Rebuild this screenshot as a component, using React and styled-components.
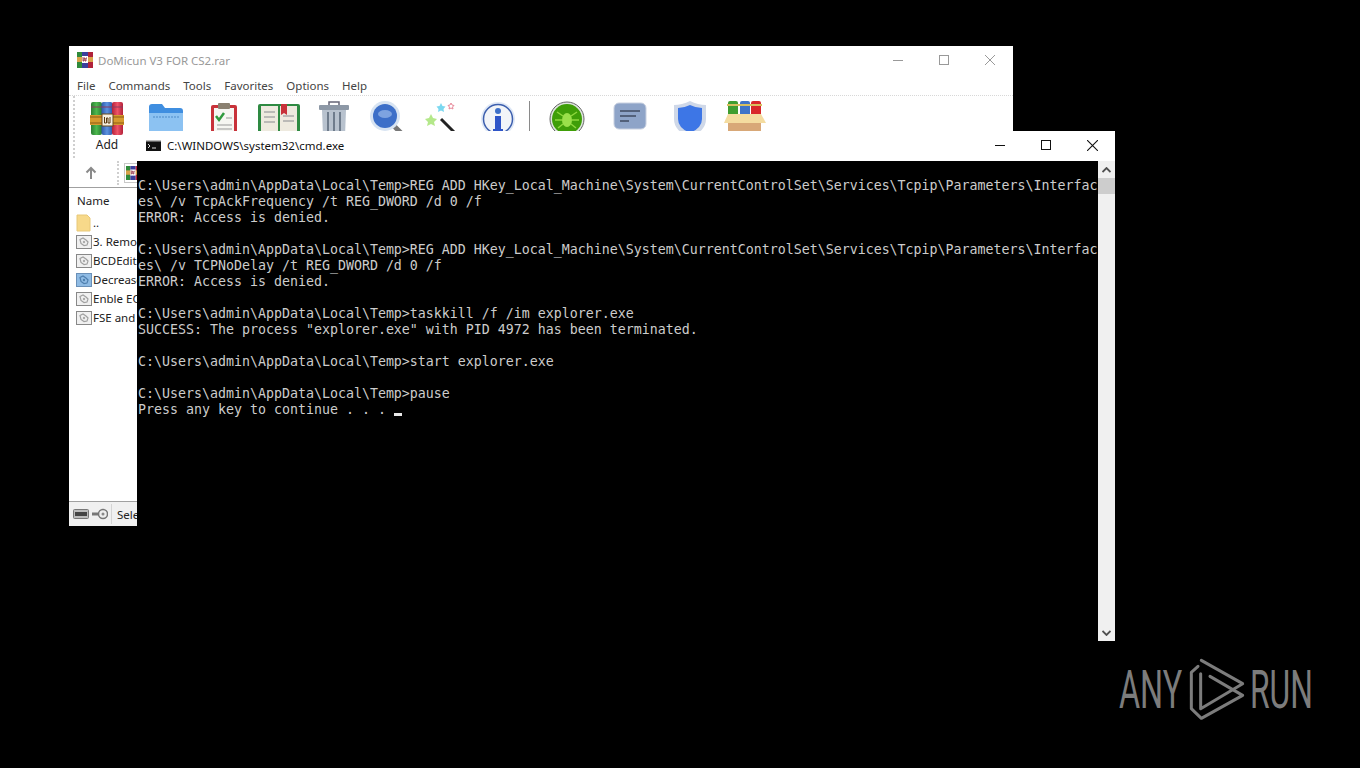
import styled, { createGlobalStyle } from "styled-components";

const GlobalStyle = createGlobalStyle`
    html, body {
        margin: 0;
        padding: 0;
        background: #000;
        overflow: hidden;
    }
`;

const uiFont = `"Noto Sans", "Open Sans", sans-serif`;

const Desktop = styled.div`
    position: relative;
    width: 1360px;
    height: 768px;
    background: #000;
    overflow: hidden;
`;

const RarWindow = styled.div`
    position: absolute;
    left: 69px;
    top: 46px;
    width: 944px;
    height: 480px;
    display: flex;
    flex-direction: column;
    background: #fff;
    font-family: ${uiFont};
    font-size: 11.5px;
    color: #222;
    overflow: hidden;
`;

const RarTitleBar = styled.div`
    height: 30px;
    flex: none;
    box-sizing: border-box;
    padding: 0 0 2px 8px;
    display: flex;
    align-items: center;
    gap: 5px;
    color: #999;
`;

const TitleText = styled.span`
    flex: 1;
    white-space: nowrap;
`;

const CaptionButtons = styled.div`
    display: flex;
    height: 100%;
`;

const CaptionButton = styled.div`
    width: 46px;
    height: 100%;
    display: flex;
    align-items: center;
    justify-content: center;
    color: ${p => p.$active ? "#111" : "#999"};
`;

const MenuBar = styled.div`
    height: 20px;
    flex: none;
    box-sizing: border-box;
    padding: 0 0 0 8px;
    display: flex;
    align-items: center;
    gap: 13px;
    color: #444;
    border-bottom: 1px dotted #d8d8d8;
`;

const Toolbar = styled.div`
    height: 62px;
    flex: none;
    display: flex;
    padding-left: 9px;
    border-left: 0;
    box-sizing: border-box;
    position: relative;
`;

const Gripper = styled.div`
    position: absolute;
    left: 4px;
    top: 0;
    bottom: 0;
    border-left: 2px dotted #cfcfcf;
`;

const ToolButton = styled.div`
    width: ${p => p.$w}px;
    flex: none;
    display: flex;
    flex-direction: column;
    align-items: center;
    padding-top: 5px;
`;

const ToolLabel = styled.span`
    line-height: 14px;
    padding-top: 1px;
    font-size: 12px;
    color: #222;
`;

const ToolSeparator = styled.div`
    width: 1px;
    height: 36px;
    flex: none;
    margin: 5px 5px 0 5px;
    background: #8a8a8a;
`;

const AddressBar = styled.div`
    height: 30px;
    flex: none;
    display: flex;
    align-items: center;
    padding-left: 16px;
    border-bottom: 1px solid #a0a0a0;
    box-sizing: border-box;
`;

const AddressDots = styled.div`
    height: 24px;
    margin: 0 5px 0 20px;
    border-left: 2px dotted #cfcfcf;
`;

const AddressIconBox = styled.div`
    width: 18px;
    height: 20px;
    display: flex;
    align-items: center;
    justify-content: center;
    border: 1px solid #c8c8c8;
    box-sizing: border-box;
`;

const ListHeader = styled.div`
    height: 25px;
    flex: none;
    box-sizing: border-box;
    display: flex;
    align-items: center;
    padding-left: 8px;
    color: #222;
`;

const FileList = styled.div`
    flex: 1;
    display: flex;
    flex-direction: column;
`;

const FileRow = styled.div`
    height: 19px;
    flex: none;
    display: flex;
    align-items: center;
    padding-left: 7px;
    gap: 1px;
    white-space: nowrap;
    color: #222;
`;

const StatusBar = styled.div`
    height: 25px;
    flex: none;
    display: flex;
    align-items: center;
    background: #f0f0f0;
    border-top: 1px solid #a0a0a0;
    box-sizing: border-box;
    padding-left: 4px;
    gap: 2px;
`;

const StatusDivider = styled.div`
    width: 1px;
    height: 20px;
    margin: 0 3px 0 1px;
    background: #d4d4d4;
`;

const CmdWindow = styled.div`
    position: absolute;
    left: 137px;
    top: 131px;
    width: 978px;
    height: 510px;
    display: flex;
    flex-direction: column;
    background: #fff;
`;

const CmdTitleBar = styled.div`
    height: 30px;
    flex: none;
    box-sizing: border-box;
    padding: 0 0 2px 9px;
    display: flex;
    align-items: center;
    gap: 6px;
    font-family: ${uiFont};
    font-size: 11.5px;
    color: #111;
`;

const CmdBody = styled.div`
    flex: 1;
    display: flex;
    min-height: 0;
`;

const Console = styled.pre`
    flex: 1;
    margin: 0;
    padding: 17px 0 0 1px;
    background: #000;
    color: #ccc;
    font-family: "DejaVu Sans Mono", "Liberation Mono", monospace;
    font-size: 13.29px;
    line-height: 16px;
    overflow: hidden;
`;

const Cursor = styled.span`
    display: inline-block;
    width: 8px;
    height: 3px;
    background: #e8e8e8;
    vertical-align: -2px;
`;

const ScrollBar = styled.div`
    width: 17px;
    flex: none;
    display: flex;
    flex-direction: column;
    background: #f0f0f0;
`;

const ScrollArrow = styled.div`
    height: 17px;
    flex: none;
    display: flex;
    align-items: center;
    justify-content: center;
`;

const ScrollThumb = styled.div`
    height: 16px;
    flex: none;
    background: #cdcdcd;
`;

const ScrollTrack = styled.div`
    flex: 1;
`;

const Watermark = styled.div`
    position: absolute;
    left: 1119px;
    top: 657px;
    display: flex;
    align-items: center;
    height: 65px;
    color: #7c7c7c;
    font-family: Roboto, "Liberation Sans", sans-serif;
    font-weight: 400;
    font-size: 53px;
`;

const LogoWord = styled.div`
    width: ${p => p.$w}px;
    margin-left: ${p => p.$ml || 0}px;
    white-space: nowrap;
    transform: scaleX(${p => p.$sx});
    transform-origin: left center;
`;

const MinIcon = ({ size = 10 }) => (
    <svg width={size} height={size} viewBox="0 0 10 10"><path d="M0 5.5h10" stroke="currentColor" fill="none" /></svg>
);
const MaxIcon = ({ size = 10 }) => (
    <svg width={size} height={size} viewBox="0 0 10 10"><rect x=".5" y=".5" width="9" height="9" stroke="currentColor" fill="none" /></svg>
);
const CloseIcon = ({ size = 10 }) => (
    <svg width={size} height={size} viewBox="0 0 10 10"><path d="M0 0l10 10M10 0L0 10" stroke="currentColor" fill="none" /></svg>
);

const RarLogo = ({ size = 16 }) => (
    <svg width={size} height={size} viewBox="0 0 16 16">
        <rect x="0" y="0" width="5" height="16" fill="#2f8a3a" />
        <rect x="5" y="0" width="6" height="16" fill="#3a3f9c" />
        <rect x="11" y="0" width="5" height="16" fill="#b0213a" />
        <rect x="0" y="5" width="16" height="5" fill="#d9a24a" />
        <rect x="5" y="4" width="6" height="7" fill="#fff" />
        <path d="M6 5v4h1V6h1v3h1V6h1" stroke="#8a1d33" strokeWidth=".8" fill="none" />
    </svg>
);

const AddIcon = () => (
    <svg width="36" height="36" viewBox="0 0 36 36">
        <defs>
            <linearGradient id="addG" x1="0" x2="1"><stop offset="0" stopColor="#2a7d33" /><stop offset=".5" stopColor="#4cb84e" /><stop offset="1" stopColor="#2a7d33" /></linearGradient>
            <linearGradient id="addB" x1="0" x2="1"><stop offset="0" stopColor="#2f58a8" /><stop offset=".5" stopColor="#5c93e0" /><stop offset="1" stopColor="#2f58a8" /></linearGradient>
            <linearGradient id="addR" x1="0" x2="1"><stop offset="0" stopColor="#b3213a" /><stop offset=".5" stopColor="#ee5468" /><stop offset="1" stopColor="#b3213a" /></linearGradient>
        </defs>
        <rect x="2" y="1" width="11" height="33" rx="2" fill="url(#addG)" />
        <rect x="12.500" y="1" width="11" height="33" rx="2" fill="url(#addB)" />
        <rect x="23" y="1" width="11" height="33" rx="2" fill="url(#addR)" />
        <path d="M2 6h32" stroke="#8a3a60" strokeWidth="1" />
        <rect x="1" y="14" width="34" height="10" fill="#d69a2e" />
        <path d="M1 16h12M1 22h12M24 16h11M24 22h11" stroke="#8a5a14" />
        <rect x="13" y="13" width="11" height="12" fill="#f6efe0" stroke="#6b4a1a" />
        <path d="M15.500 16v6h2v-5h1.500v5h2v-6" fill="none" stroke="#5a3a10" />
    </svg>
);

const FolderIcon = () => (
    <svg width="36" height="36" viewBox="0 0 36 36">
        <path d="M1 6q0-3 3-3h10l3 4h15q3 0 3 3v24H1z" fill="#3f8ee0" />
        <rect x="1" y="12" width="34" height="22" fill="#8cc2f2" />
        <path d="M5 16h26" stroke="#4d8ac8" strokeDasharray="2 1" />
    </svg>
);

const TestIcon = () => (
    <svg width="36" height="36" viewBox="0 0 36 36">
        <rect x="5" y="4" width="26" height="31" rx="2" fill="#c8323a" />
        <rect x="8" y="7" width="20" height="27" fill="#f6f6f2" />
        <rect x="12" y="2" width="12" height="6" rx="1" fill="#8a8070" />
        <path d="M10 15l3 4 5-7" stroke="#2f9a3e" strokeWidth="2.5" fill="none" />
        <path d="M20 17h6M11 24h15M11 28h15" stroke="#999" />
    </svg>
);

const ViewIcon = () => (
    <svg width="44" height="36" viewBox="0 0 44 36">
        <rect x="1" y="3" width="42" height="31" rx="2" fill="#2e8a42" />
        <rect x="4" y="5" width="17" height="27" fill="#eeeadf" />
        <rect x="23" y="5" width="17" height="27" fill="#eeeadf" />
        <path d="M7 11h11M7 16h11M7 21h11M26 15h11M26 20h11" stroke="#aaa" strokeWidth="1.5" />
        <path d="M24 3h6v11l-3-2-3 2z" fill="#c8323a" />
    </svg>
);

const TrashIcon = () => (
    <svg width="32" height="36" viewBox="0 0 32 36">
        <rect x="11" y="1" width="10" height="4" fill="none" stroke="#667" strokeWidth="1.5" />
        <rect x="1" y="4" width="30" height="5" rx="1" fill="#8d98a6" />
        <path d="M4 9h24l-1 26H5z" fill="#b8c2ce" />
        <path d="M10 11v23M16 11v23M22 11v23" stroke="#6f7c8c" strokeWidth="2" />
    </svg>
);

const FindIcon = () => (
    <svg width="36" height="36" viewBox="0 0 36 36">
        <path d="M23 23l10 10" stroke="#777" strokeWidth="5" />
        <circle cx="16" cy="15" r="15" fill="#d8e4f2" />
        <circle cx="16" cy="15" r="12" fill="#3d6fc8" />
        <ellipse cx="16" cy="13" rx="7" ry="4" fill="#7ea3e0" />
    </svg>
);

const WizardIcon = () => (
    <svg width="36" height="36" viewBox="0 0 36 36">
        <path d="M17 18l16 16" stroke="#222" strokeWidth="3" />
        <path d="M7 13l2 4 4 1-3 3 1 4-4-2-4 2 1-4-3-3 4-1z" fill="#b4e88a" />
        <path d="M17 2l1.500 3 3 .5-2 2.500.5 3-3-1.500-3 1.500.5-3-2-2.500 3-.5z" fill="#7bd8f0" />
        <path d="M27 2l1 2 2 .5-1.500 1.500.5 2-2-1-2 1 .5-2L24 4.500l2-.5z" fill="none" stroke="#e88a9a" />
    </svg>
);

const InfoIcon = () => (
    <svg width="36" height="36" viewBox="0 0 36 36">
        <circle cx="18" cy="18" r="17" fill="#dfe8f6" />
        <circle cx="18" cy="18" r="14.500" fill="#f2f4f8" stroke="#3d5fae" strokeWidth="1.500" />
        <circle cx="18" cy="10" r="3" fill="#3d6fc8" />
        <path d="M15 15h6v13h2v3H13v-3h2z" fill="#2f55c8" />
    </svg>
);

const BugIcon = () => (
    <svg width="36" height="36" viewBox="0 0 36 36">
        <circle cx="18" cy="18" r="17" fill="#dfe6df" stroke="#666" />
        <circle cx="18" cy="18" r="15" fill="#3f9e08" />
        <ellipse cx="18" cy="19" rx="5" ry="7" fill="#9ae04a" />
        <path d="M8 11l6 4M28 11l-6 4M6 19h7M30 19h-7M9 27l5-4M27 27l-5-4" stroke="#8ed83e" strokeWidth="1.500" />
    </svg>
);

const CommentIcon = () => (
    <svg width="34" height="36" viewBox="0 0 34 36">
        <rect x="1" y="2" width="32" height="26" rx="5" fill="#8ea4c8" stroke="#c8d0e0" />
        <path d="M7 10h20M7 15h16M7 20h9" stroke="#3f4a60" strokeWidth="1.600" />
    </svg>
);

const ProtectIcon = () => (
    <svg width="32" height="36" viewBox="0 0 32 36">
        <path d="M16 0q8 4 16 4v14q0 12-16 18Q0 30 0 18V4q8 0 16-4z" fill="#cfd8e8" />
        <path d="M16 4q6 3 12 3v11q0 9-12 14Q4 27 4 18V7q6 0 12-3z" fill="#3d76e6" />
    </svg>
);

const SfxIcon = () => (
    <svg width="44" height="36" viewBox="0 0 44 36">
        <rect x="5" y="0" width="10" height="16" rx="2" fill="#3f9e30" />
        <rect x="17" y="0" width="10" height="16" rx="2" fill="#3f74c8" />
        <rect x="28" y="0" width="10" height="16" rx="2" fill="#d8282a" />
        <rect x="4" y="3" width="35" height="2" fill="#d8c060" />
        <path d="M5 13h33l5 9H1z" fill="#f4dca0" />
        <rect x="5" y="22" width="33" height="13" fill="#d8a878" />
    </svg>
);

const BatIcon = ({ selected }) => (
    <svg width="16" height="14" viewBox="0 0 16 14">
        <rect x=".5" y=".5" width="15" height="13" fill={selected ? "#8fbbe4" : "#f0f0f0"} stroke={selected ? "#6a90b8" : "#888"} />
        <path d="M4 4.500l3-1.500 3 2 2 2-1 3-3 .5-3-2z" fill="none" stroke={selected ? "#4f7fae" : "#a0a0a0"} strokeWidth="1.200" />
        <circle cx="8" cy="7" r="1.200" fill={selected ? "#4f7fae" : "#aaa"} />
    </svg>
);

const FolderSmall = () => (
    <svg width="16" height="18" viewBox="0 0 16 18">
        <path d="M1 1h10l3 3v13H1z" fill="#f7d98a" stroke="#e8c878" />
    </svg>
);

const UpArrow = () => (
    <svg width="12" height="14" viewBox="0 0 12 14">
        <path d="M6 13V2M1.500 6.500L6 2l4.500 4.500" stroke="#8a8a8a" strokeWidth="2" fill="none" />
    </svg>
);

const Chevron = ({ down }) => (
    <svg width="9" height="6" viewBox="0 0 9 6">
        <path d={down ? "M.5 1l4 4 4-4" : "M.5 5l4-4 4 4"} stroke="#505050" strokeWidth="1.800" fill="none" />
    </svg>
);

const CmdGlyph = () => (
    <svg width="15" height="11" viewBox="0 0 15 11">
        <rect width="15" height="11" fill="#111" />
        <rect y="0" width="15" height="1.500" fill="#bbb" />
        <path d="M2 4l2 2-2 2M6 8h4" stroke="#ddd" fill="none" />
    </svg>
);

const DriveIcon = () => (
    <svg width="16" height="10" viewBox="0 0 16 10">
        <rect x=".5" y=".5" width="15" height="9" rx="1" fill="#bbb" stroke="#777" />
        <rect x="2" y="3" width="12" height="4" fill="#444" />
    </svg>
);

const KeyIcon = () => (
    <svg width="17" height="12" viewBox="0 0 17 12">
        <path d="M1 6h10" stroke="#777" strokeWidth="3" />
        <circle cx="12" cy="6" r="4.500" fill="#eee" stroke="#777" strokeWidth="1.500" />
        <circle cx="12" cy="6" r="1.500" fill="#888" />
    </svg>
);

const AnyRunMark = () => (
    <svg width="60" height="65" viewBox="260 50 180 195">
        <g fill="none" stroke="#7c7c7c" strokeWidth="9" strokeLinejoin="round" strokeLinecap="round">
            <path d="M296 78L276 96V205L306 234L430 165L332 108" />
            <path d="M304 100V205L430 130L306 60" />
        </g>
    </svg>
);

const tools = [
    { w: 58, label: "Add", icon: <AddIcon /> },
    { w: 60, icon: <FolderIcon /> },
    { w: 56, icon: <TestIcon /> },
    { w: 54, icon: <ViewIcon /> },
    { w: 56, icon: <TrashIcon /> },
    { w: 50, icon: <FindIcon /> },
    { w: 60, icon: <WizardIcon /> },
    { w: 52, icon: <InfoIcon /> },
    { sep: true },
    { w: 64, icon: <BugIcon /> },
    { w: 62, icon: <CommentIcon /> },
    { w: 58, icon: <ProtectIcon /> },
    { w: 52, icon: <SfxIcon /> },
];

const files = ["3. Remo", "BCDEdit", "Decrease", "Enble EC", "FSE and"];

const consoleText = `C:\\Users\\admin\\AppData\\Local\\Temp>REG ADD HKey_Local_Machine\\System\\CurrentControlSet\\Services\\Tcpip\\Parameters\\Interfac
es\\ /v TcpAckFrequency /t REG_DWORD /d 0 /f
ERROR: Access is denied.

C:\\Users\\admin\\AppData\\Local\\Temp>REG ADD HKey_Local_Machine\\System\\CurrentControlSet\\Services\\Tcpip\\Parameters\\Interfac
es\\ /v TCPNoDelay /t REG_DWORD /d 0 /f
ERROR: Access is denied.

C:\\Users\\admin\\AppData\\Local\\Temp>taskkill /f /im explorer.exe
SUCCESS: The process "explorer.exe" with PID 4972 has been terminated.

C:\\Users\\admin\\AppData\\Local\\Temp>start explorer.exe

C:\\Users\\admin\\AppData\\Local\\Temp>pause
Press any key to continue . . . `;

const App = () => {
    return (
        <Desktop>
            <GlobalStyle />
            <RarWindow>
                <RarTitleBar>
                    <RarLogo />
                    <TitleText>DoMicun V3 FOR CS2.rar</TitleText>
                    <CaptionButtons>
                        <CaptionButton><MinIcon /></CaptionButton>
                        <CaptionButton><MaxIcon /></CaptionButton>
                        <CaptionButton><CloseIcon /></CaptionButton>
                    </CaptionButtons>
                </RarTitleBar>
                <MenuBar>
                    {["File", "Commands", "Tools", "Favorites", "Options", "Help"].map(m => <span key={m}>{m}</span>)}
                </MenuBar>
                <Toolbar>
                    <Gripper />
                    {tools.map((t, i) => t.sep ? <ToolSeparator key={i} /> : (
                        <ToolButton key={i} $w={t.w}>
                            {t.icon}
                            {t.label && <ToolLabel>{t.label}</ToolLabel>}
                        </ToolButton>
                    ))}
                </Toolbar>
                <AddressBar>
                    <UpArrow />
                    <AddressDots />
                    <AddressIconBox><RarLogo size={14} /></AddressIconBox>
                </AddressBar>
                <ListHeader>Name</ListHeader>
                <FileList>
                    <FileRow><FolderSmall /><span>..</span></FileRow>
                    {files.map((f, i) => (
                        <FileRow key={f}><BatIcon selected={i === 2} />{f}</FileRow>
                    ))}
                </FileList>
                <StatusBar>
                    <DriveIcon />
                    <KeyIcon />
                    <StatusDivider />
                    <span>Select</span>
                </StatusBar>
            </RarWindow>
            <CmdWindow>
                <CmdTitleBar>
                    <CmdGlyph />
                    <TitleText>C:\WINDOWS\system32\cmd.exe</TitleText>
                    <CaptionButtons>
                        <CaptionButton $active><MinIcon /></CaptionButton>
                        <CaptionButton $active><MaxIcon /></CaptionButton>
                        <CaptionButton $active><CloseIcon size={11} /></CaptionButton>
                    </CaptionButtons>
                </CmdTitleBar>
                <CmdBody>
                    <Console>{consoleText}<Cursor /></Console>
                    <ScrollBar>
                        <ScrollArrow><Chevron /></ScrollArrow>
                        <ScrollThumb />
                        <ScrollTrack />
                        <ScrollArrow><Chevron down /></ScrollArrow>
                    </ScrollBar>
                </CmdBody>
            </CmdWindow>
            <Watermark>
                <LogoWord $w={67} $sx={0.61}>ANY</LogoWord>
                <AnyRunMark />
                <LogoWord $w={60} $ml={4} $sx={0.6}>RUN</LogoWord>
            </Watermark>
        </Desktop>
    );
};

export default App;
